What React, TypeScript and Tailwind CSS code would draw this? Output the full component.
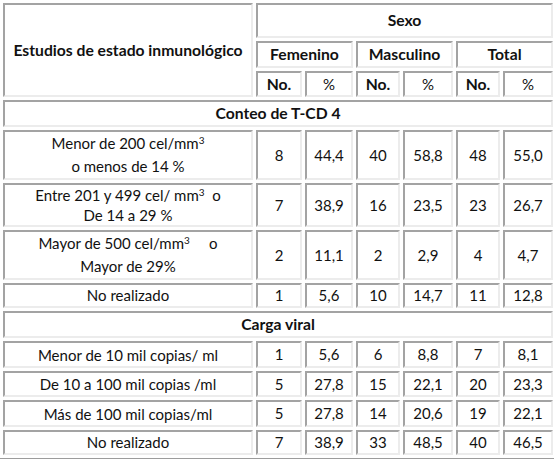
import React from 'react';

type Row = { label: React.ReactNode; h: string; lh: string; vals: string[] };

const mm3 = (
  <>
    mm<sup className="text-[10px]">3</sup>
  </>
);

const conteo: Row[] = [
  {
    label: (
      <>
        Menor de 200 cel/{mm3}
        <br />o menos de 14 %
      </>
    ),
    h: 'h-[49px]',
    lh: 'leading-[23px]',
    vals: ['8', '44,4', '40', '58,8', '48', '55,0'],
  },
  {
    label: (
      <>
        Entre 201 y 499 cel/ {mm3}&nbsp; o
        <br />
        De 14 a 29 %
      </>
    ),
    h: 'h-[44px]',
    lh: 'leading-[20px]',
    vals: ['7', '38,9', '16', '23,5', '23', '26,7'],
  },
  {
    label: (
      <>
        Mayor de 500 cel/{mm3}&nbsp;&nbsp;&nbsp;&nbsp; o
        <br />
        Mayor de 29%
      </>
    ),
    h: 'h-[49px]',
    lh: 'leading-[23px]',
    vals: ['2', '11,1', '2', '2,9', '4', '4,7'],
  },
  { label: 'No realizado', h: 'h-[25px]', lh: 'leading-[19px]', vals: ['1', '5,6', '10', '14,7', '11', '12,8'] },
];

const carga: Row[] = [
  { label: 'Menor de 10 mil copias/ ml', h: 'h-[27px]', lh: 'leading-[20px]', vals: ['1', '5,6', '6', '8,8', '7', '8,1'] },
  { label: 'De 10 a 100 mil copias /ml', h: 'h-[26px]', lh: 'leading-[20px]', vals: ['5', '27,8', '15', '22,1', '20', '23,3'] },
  { label: 'Más de 100 mil copias/ml', h: 'h-[27px]', lh: 'leading-[20px]', vals: ['5', '27,8', '14', '20,6', '19', '22,1'] },
  { label: 'No realizado', h: 'h-[25px]', lh: 'leading-[19px]', vals: ['7', '38,9', '33', '48,5', '40', '46,5'] },
];

const cell =
  'border-2 border-t-[#a3a3a3] border-l-[#a3a3a3] border-b-[#ececec] border-r-[#ececec] p-0 text-center align-middle';

function DataRows({ rows }: { rows: Row[] }) {
  return (
    <>
      {rows.map((r, i) => (
        <tr key={i}>
          <td className={`${cell} ${r.h} ${r.lh} text-[15px]`}>{r.label}</td>
          {r.vals.map((v, j) => (
            <td key={j} className={`${cell} ${r.h} leading-[19px] text-[15px]`}>
              {v}
            </td>
          ))}
        </tr>
      ))}
    </>
  );
}

export default function App() {
  return (
    <div className="w-[554px] h-[460px] bg-white overflow-hidden">
      <table
        className="-mt-px -ml-px w-[552px] border-separate border-spacing-[3px] border border-t-[#e6e6e6] border-l-[#e6e6e6] border-b-[#9c9c9c] border-r-[#9c9c9c] bg-white text-[#111] table-fixed leading-[19px]"
        style={{ fontFamily: 'Lato, "Open Sans", sans-serif' }}
      >
        <colgroup>
          <col className="w-[250px]" />
          <col className="w-[46px]" />
          <col className="w-[48px]" />
          <col className="w-[44px]" />
          <col className="w-[50px]" />
          <col className="w-[44px]" />
          <col className="w-[50px]" />
        </colgroup>
        <tbody>
          <tr>
            <td rowSpan={3} className={`${cell} font-bold text-[15.7px]`}>
              Estudios de estado inmunológico
            </td>
            <td colSpan={6} className={`${cell} h-[35px] font-bold text-[15.7px]`}>
              Sexo
            </td>
          </tr>
          <tr>
            <td colSpan={2} className={`${cell} h-[27px] font-bold text-[15.7px]`}>
              Femenino
            </td>
            <td colSpan={2} className={`${cell} h-[27px] font-bold text-[15.7px]`}>
              Masculino
            </td>
            <td colSpan={2} className={`${cell} h-[27px] font-bold text-[15.7px]`}>
              Total
            </td>
          </tr>
          <tr>
            <td className={`${cell} h-[26px] font-bold text-[15.7px]`}>No.</td>
            <td className={`${cell} h-[26px] text-[15px]`}>%</td>
            <td className={`${cell} h-[26px] font-bold text-[15.7px]`}>No.</td>
            <td className={`${cell} h-[26px] text-[15px]`}>%</td>
            <td className={`${cell} h-[26px] font-bold text-[15.7px]`}>No.</td>
            <td className={`${cell} h-[26px] text-[15px]`}>%</td>
          </tr>
          <tr>
            <td colSpan={7} className={`${cell} h-[27px] font-bold text-[15.7px]`}>
              Conteo de T-CD 4
            </td>
          </tr>
          <DataRows rows={conteo} />
          <tr>
            <td colSpan={7} className={`${cell} h-[27px] font-bold text-[15.7px]`}>
              Carga viral
            </td>
          </tr>
          <DataRows rows={carga} />
        </tbody>
      </table>
    </div>
  );
}
